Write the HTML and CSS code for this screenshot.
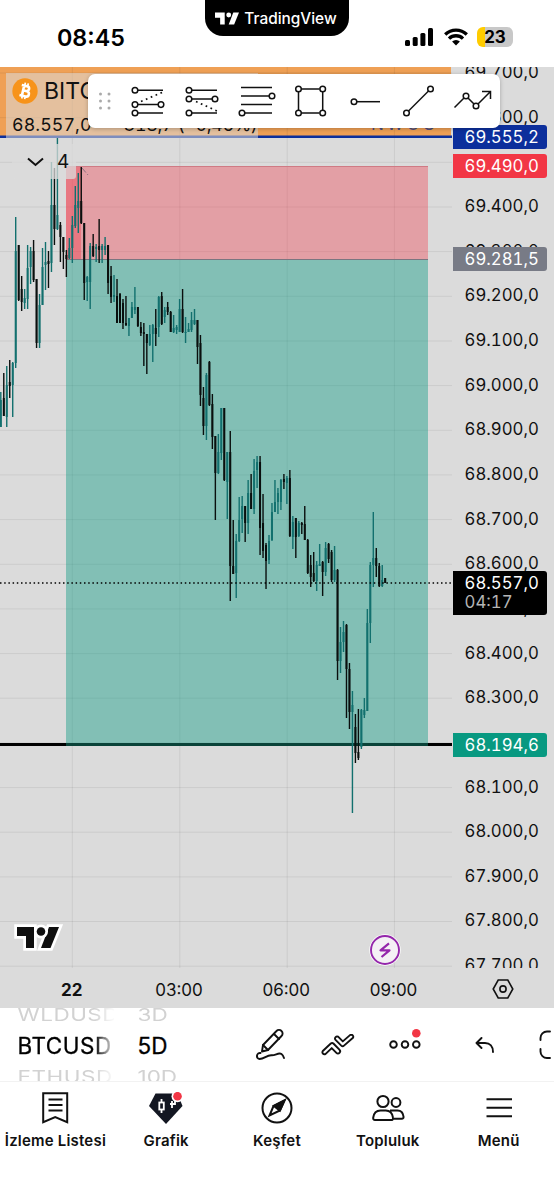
FILE: index.html
```html
<!DOCTYPE html>
<html lang="tr">
<head>
<meta charset="UTF-8">
<meta name="viewport" content="width=device-width, initial-scale=1.0">
<title>BTCUSD - TradingView</title>
<link rel="stylesheet" href="styles.css">
</head>
<body>
<div class="app">
    <header class="status-bar">
        <div class="clock">08:45</div>
        <div class="island">
            <svg width="24" height="13" viewBox="0 0 42 21" fill="#fff"><path d="M0 0h17v21H9V9H0z"/><circle cx="24" cy="4.5" r="4.3"/><path d="M32 0h10l-8.500 21H24z"/></svg>
            <span>TradingView</span>
        </div>
        <div class="status-icons">
            <svg width="29" height="18" viewBox="0 0 29 18"><rect x="0" y="12" width="5" height="6" rx="1.500"/><rect x="7.700" y="9" width="5" height="9" rx="1.500"/><rect x="15.400" y="5" width="5" height="13" rx="1.500"/><rect x="23" y="0" width="5" height="18" rx="1.500"/></svg>
            <svg width="24" height="18" viewBox="0 0 24 18"><g fill="none" stroke="#000" stroke-width="3.300"><path d="M1.200 6.500a15.500 15.500 0 0 1 21.600 0"/><path d="M5 10.600a10 10 0 0 1 14 0"/></g><path d="M12 17.500l-3.900-3.900a5.600 5.600 0 0 1 7.800 0z"/></svg>
            <div class="battery">23</div>
        </div>
    </header>

    <main class="chart">
        <div class="plot">
            <svg id="canvas" class="canvas" width="452" height="901" viewBox="0 67 452 901">
                <rect x="0" y="67" width="451" height="69" fill="#efa055"/>
                <text x="371" y="129.500" class="zone-text">NWOG</text>
                <g id="grid" stroke="#000" stroke-opacity=".07"></g>
                <rect x="66" y="166" width="362" height="93.500" fill="#f23645" fill-opacity=".36"/>
                <rect x="66" y="166" width="15" height="93.500" fill="#f23645" fill-opacity=".36"/>
                <rect x="66" y="259.500" width="362" height="485.500" fill="#089981" fill-opacity=".42"/>
                <path d="M66 166.500h362" stroke="#cf7a84"/>
                <path d="M66 259.500h362" stroke="#7a7680"/>
                <path d="M82 168l6 7" stroke="#8d7080" stroke-dasharray="6 2"/>
                <path d="M0 744.500h452" stroke="#000" stroke-width="3"/>
                <path d="M66 744.500h362" stroke="#0a4339" stroke-width="3"/>
                <path d="M0 136.800h452" stroke="#0c2f9c" stroke-width="2.400"/>
                <g id="candles"></g>
                <path d="M0 583h452" stroke="#000" stroke-width="1.500" stroke-dasharray="1.500 2.700"/>
            </svg>
            <div class="legend">
                <div class="symbol">
                    <svg width="26" height="26" viewBox="0 0 26 26"><circle cx="13" cy="13" r="12.700" fill="#f7931a"/><g transform="rotate(13 13 13)" fill="none" stroke="#fff"><path stroke-width="2.600" d="M8.500 7.800h5.500a2.400 2.400 0 0 1 0 5H11h3.800a2.700 2.700 0 0 1 0 5.400H8.500M11 7.800v10.400"/><path stroke-width="1.700" d="M11.500 4.800v3M14.500 4.800v3M11.500 18v3M14.500 18v3"/></g></svg>
                    <span>BITCOIN</span>
                </div>
                <div class="quote"><span>68.557,0</span><span class="change">−318,7 (−0,46%)</span></div>
            </div>
            <div class="indicator-count">
                <svg width="17" height="10" viewBox="0 0 17 10" fill="none" stroke="#111" stroke-width="2"><path d="M1 1.500l7.500 6.500L16 1.500"/></svg>
                <span>4</span>
            </div>
            <svg class="watermark" width="50" height="29" viewBox="-4 -4 50 29"><g fill="#0f0f0f" stroke="#fff" stroke-width="5.500" paint-order="stroke"><path d="M0 0h17v21H9V9H0z"/><path d="M32 0h10l-8.500 21H24z"/><circle cx="24" cy="4.500" r="4.300"/></g><path fill="#0f0f0f" d="M0 0h17v21H9V9H0z"/></svg>
            <svg class="event" width="32" height="32" viewBox="0 0 32 32"><circle cx="16" cy="16" r="15.700" fill="#fff"/><circle cx="16" cy="16" r="14" fill="#f4f0f5" stroke="#9426ab" stroke-width="1.900"/><path d="M20 9.300l-8.500 7h9L12.500 23" fill="none" stroke="#9426ab" stroke-width="2.200" stroke-linejoin="round"/></svg>
        </div>
        <div class="price-axis">
            <div class="prices">
                <span>69.700,0</span><span>69.600,0</span><span>69.500,0</span><span>69.400,0</span><span>69.300,0</span><span>69.200,0</span><span>69.100,0</span><span>69.000,0</span><span>68.900,0</span><span>68.800,0</span><span>68.700,0</span><span>68.600,0</span><span>68.500,0</span><span>68.400,0</span><span>68.300,0</span><span>68.200,0</span><span>68.100,0</span><span>68.000,0</span><span>67.900,0</span><span>67.800,0</span><span>67.700,0</span>
            </div>
            <div class="tag tag-blue">69.555,2</div>
            <div class="tag tag-red">69.490,0</div>
            <div class="tag tag-gray">69.281,5</div>
            <div class="tag tag-last">68.557,0<small>04:17</small></div>
            <div class="tag tag-green">68.194,6</div>
        </div>
        <div class="draw-tools">
            <svg class="grip" width="14" height="18" viewBox="0 0 14 18" fill="#aaa"><circle cx="2.500" cy="2" r="1.500"/><circle cx="11" cy="2" r="1.500"/><circle cx="2.500" cy="9" r="1.500"/><circle cx="11" cy="9" r="1.500"/><circle cx="2.500" cy="16" r="1.500"/><circle cx="11" cy="16" r="1.500"/></svg>
            <svg class="tool" viewBox="0 0 54 54"><path d="M17 16.300h25M17 30.600h20M17 39h25"/><path class="dots" d="M20 27.500L42 18"/><circle cx="14" cy="16.300" r="2.800"/><circle cx="14" cy="30.600" r="2.800"/><circle cx="40" cy="30.600" r="2.800"/><circle cx="14" cy="39" r="2.800"/></svg>
            <svg class="tool" viewBox="0 0 54 54"><path d="M17 16.300h25M17 25h20M17 39h25"/><path class="dots" d="M21 27.500L42 37"/><circle cx="14" cy="16.300" r="2.800"/><circle cx="14" cy="25" r="2.800"/><circle cx="40" cy="25" r="2.800"/><circle cx="14" cy="39" r="2.800"/></svg>
            <svg class="tool" viewBox="0 0 54 54"><path d="M12 13.400h31M12 22h28M12 30.600h31M16 39h27"/><circle cx="43" cy="22" r="2.800"/><circle cx="13" cy="39" r="2.800"/></svg>
            <svg class="tool" viewBox="0 0 54 54"><path d="M18.500 15h18M18.500 39h18M15.500 18v18M39.700 18v18"/><circle cx="15.500" cy="15" r="2.800"/><circle cx="39.700" cy="15" r="2.800"/><circle cx="15.500" cy="39" r="2.800"/><circle cx="39.700" cy="39" r="2.800"/></svg>
            <svg class="tool" viewBox="0 0 54 54"><path d="M20 27.700h23"/><circle cx="17" cy="27.700" r="2.800"/></svg>
            <svg class="tool" viewBox="0 0 54 54"><path d="M17.500 37l20-20"/><circle cx="15.500" cy="39" r="2.800"/><circle cx="39.500" cy="15" r="2.800"/></svg>
            <svg class="tool" viewBox="0 0 54 54"><path d="M9.500 33.500L19 24M23 24l6 6M33 30l12.500-12.500M37 17.500h8.500v7.500"/><circle cx="21" cy="22" r="2.800"/><circle cx="31" cy="32" r="2.800"/></svg>
        </div>
    </main>

    <div class="time-axis">
        <span class="day">22</span><span>03:00</span><span>06:00</span><span>09:00</span>
        <svg width="22" height="20" viewBox="0 0 22 20" fill="none" stroke="#111" stroke-width="1.600"><path d="M6.200 1h9.600l5 9-5 9H6.200l-5-9z"/><circle cx="11" cy="10" r="3.100"/></svg>
    </div>

    <div class="toolbar">
        <div class="wheel wheel-symbol"><span>WLDUSD</span><b>BTCUSD</b><span>ETHUSD</span></div>
        <div class="wheel wheel-interval"><span>3D</span><b>5D</b><span>10D</span></div>
        <div class="actions">
            <svg width="32" height="34" viewBox="0 0 32 34"><path d="M8 17L21.500 3a3.400 3.400 0 0 1 5 0 3.400 3.400 0 0 1 0 5L13 22l-6 1.500z"/><path d="M8 17l5 5M19 6l5 5"/><path d="M5.500 25A3 3 0 1 0 4.500 31c5 0 7-4 12-3.700 4 .3 7-3.300 10-1.300 1.500 1 2 2.500 2.500 4"/></svg>
            <svg width="34" height="22" viewBox="0 0 34 22"><path d="M1.800 17l8-7.500a2 2 0 0 1 2.600 0l6 6.200a2 2 0 0 1-3 3.200l-4.700-4.800-6.300 6a2.100 2.100 0 0 1-2.600-3.100z"/><path d="M14.300 5.600l6 6a2 2 0 0 0 2.700 0l9-7.800A2.100 2.100 0 0 0 29.300.900l-7.500 6.500-4.700-4.700a2.100 2.100 0 0 0-2.800 2.900z"/></svg>
            <svg class="more" width="32" height="26" viewBox="0 0 32 26"><circle cx="4.500" cy="15.500" r="3.300"/><circle cx="16" cy="15.500" r="3.300"/><circle cx="27.300" cy="15.500" r="3.300"/><circle class="dot" cx="27.300" cy="4.300" r="4.300"/></svg>
            <i class="divider"></i>
            <svg width="20" height="16" viewBox="0 0 20 16"><path d="M6.500 1L1.500 6l5 5M2 6h8c5 0 8 3.500 8 9"/></svg>
            <svg width="12" height="30" viewBox="0 0 12 30"><path d="M11 1.500H8A6.500 6.500 0 0 0 1.500 8v2M1.500 19v2.500A6.500 6.500 0 0 0 8 28h3"/></svg>
        </div>
    </div>

    <nav class="tabs">
        <a><svg width="32" height="32" viewBox="0 0 32 32"><path d="M4.200 1.200h24v29L16.200 25l-12 5.200zM9.500 7.500h14M9.500 13h14M9.500 18.500h14"/></svg>İzleme Listesi</a>
        <a><svg width="36" height="32" viewBox="0 0 36 32"><path d="M7.500 1.500h22L34.500 14 18 32 1 14z" fill="#131722" stroke="none"/><g stroke="#fff" stroke-width="1.800"><path d="M13.500 7v14"/><rect x="11.300" y="10.500" width="4.500" height="7" fill="#131722"/><path d="M24 9v7M22 12h5M27 8v5"/></g><circle class="dot" cx="29.500" cy="4.200" r="6" fill="#fff"/><circle class="dot" cx="29.500" cy="4.200" r="4.300"/></svg>Grafik</a>
        <a><svg width="32" height="32" viewBox="0 0 32 32"><circle cx="16" cy="16" r="14.500"/><path d="M23.500 8.500l-11 5.500-4 9.500 10.500-5z"/><path d="M23.500 8.500L12.800 14l6 4.700z" fill="#111"/></svg>Keşfet</a>
        <a><svg width="34" height="32" viewBox="0 0 34 32"><circle cx="12" cy="9.500" r="5.600"/><circle cx="25" cy="10.500" r="4.400"/><path d="M4 28h16c1.500 0 2.300-.7 2-2.300-.7-4.500-3.500-7.200-7.200-7.200H9.500c-3.700 0-6.700 2.700-7.300 7.200C2 27.300 2.700 28 4 28zM19 18.500h7.500c3 0 5.500 2 6 6 .200 1.500-.4 2.200-1.800 2.200H22"/></svg>Topluluk</a>
        <a><svg width="32" height="32" viewBox="0 0 32 32"><path d="M3.500 7.300h25.500M3.500 15.700h25.500M3.500 24.300h25.500"/></svg>Menü</a>
    </nav>
</div>
<script src="chart.js"></script>
</body>
</html>
```
FILE: styles.css
```css
* {
    box-sizing: border-box;
}

body {
    margin: 0;
    background: #fff;
    color: #111;
    font-family: Inter, "Liberation Sans", sans-serif;
}

.app {
    display: flex;
    flex-direction: column;
    width: 554px;
    height: 1200px;
    overflow: hidden;
}

/* status bar */
.status-bar {
    display: grid;
    grid-template-columns: 205px 144px 1fr;
    height: 67px;
    flex: none;
}

.clock {
    padding: 22px 0 0 57px;
    font-size: 23.3px;
    line-height: 31px;
    font-weight: 600;
    color: #000;
}

.island {
    display: flex;
    align-items: center;
    justify-content: center;
    gap: 5px;
    height: 36px;
    padding-right: 2px;
    border-radius: 0 0 18px 18px;
    background: #000;
    color: #fff;
    font-size: 15.4px;
    font-weight: 500;
}

.status-icons {
    display: flex;
    align-items: center;
    gap: 9.5px;
    height: 20px;
    margin: 27px 0 0 56px;
}

.battery {
    width: 36px;
    height: 20px;
    border-radius: 6px;
    background: linear-gradient(90deg, #ffcc00 8px, #c8c8c8 8px);
    color: #000;
    font-size: 17px;
    line-height: 20px;
    font-weight: 700;
    text-align: center;
}

/* chart */
.chart {
    position: relative;
    display: flex;
    height: 901px;
    flex: none;
    background: #dbdbdb;
}

.plot {
    position: relative;
    width: 452px;
}

.canvas {
    display: block;
}

.zone-text {
    font-size: 17px;
    letter-spacing: 3px;
    fill: #4a4c80;
}

.legend {
    position: absolute;
    left: 6px;
    top: 6px;
    width: 252px;
    height: 65px;
    padding: 5px 6px;
    background: rgba(219, 219, 219, .55);
    white-space: nowrap;
}

.symbol {
    display: flex;
    align-items: center;
    gap: 6px;
    height: 26px;
    font-size: 23px;
}

.quote {
    display: flex;
    gap: 21px;
    margin-top: 9.5px;
    font-size: 17.8px;
    line-height: 22px;
    letter-spacing: .1px;
    font-variant-numeric: tabular-nums;
}

.change {
    letter-spacing: -.3px;
}

.indicator-count {
    position: absolute;
    left: 12px;
    top: 77px;
    display: flex;
    align-items: center;
    gap: 13px;
    width: 64px;
    height: 35px;
    padding-left: 15px;
    border-radius: 3px;
    background: rgba(219, 219, 219, .75);
    font-size: 19px;
}

.watermark {
    position: absolute;
    left: 13px;
    top: 856px;
}

.event {
    position: absolute;
    left: 369px;
    top: 867px;
}

.price-axis {
    position: relative;
    width: 102px;
    overflow: hidden;
    font-size: 16.8px;
    font-variant-numeric: tabular-nums;
}

.prices {
    display: flex;
    flex-direction: column;
    margin-top: -17px;
    padding-left: 12.5px;
}

.prices span {
    flex: none;
    height: 44.66px;
    line-height: 44.66px;
}

.tag {
    position: absolute;
    left: 1px;
    width: 94px;
    height: 24px;
    padding-left: 11.5px;
    border-radius: 0 3px 3px 0;
    color: #fff;
    line-height: 24px;
}

.tag small {
    display: block;
    color: #b5b5b5;
    font-size: 16.8px;
    line-height: 15px;
}

.tag-blue {
    top: 58px;
    background: #0c2f9c;
}

.tag-red {
    top: 87px;
    background: #f23645;
}

.tag-gray {
    top: 180px;
    background: #787b86;
}

.tag-last {
    top: 504px;
    height: 44px;
    background: #000;
}

.tag-green {
    top: 666px;
    background: #089981;
}

.draw-tools {
    position: absolute;
    left: 88px;
    top: 7px;
    display: flex;
    width: 412px;
    height: 54px;
    padding-left: 10px;
    border-radius: 7px;
    background: #fff;
    box-shadow: 0 1px 4px rgba(0, 0, 0, .25);
}

.grip {
    width: 14px;
    margin: 18px 9px 0 0;
}

.tool {
    width: 54px;
    height: 54px;
    flex: none;
    fill: none;
    stroke: #111;
    stroke-width: 1.5;
}

.tool .dots {
    stroke-width: 1.7;
    stroke-dasharray: 1.7 3.6;
}

/* time axis */
.time-axis {
    display: grid;
    grid-template-columns: 18px repeat(4, 107.3px) 1fr;
    align-items: center;
    height: 40px;
    flex: none;
    padding-top: 3px;
    background: #dbdbdb;
    font-size: 17px;
    text-align: center;
}

.time-axis .day {
    grid-column: 2;
    font-weight: 700;
}

.time-axis svg {
    margin: -2px 0 0 45px;
}

/* bottom toolbar */
.toolbar {
    display: flex;
    height: 74px;
    flex: none;
    overflow: hidden;
    border-bottom: 1px solid #f2f2f2;
}

.wheel {
    display: flex;
    flex-direction: column;
    justify-content: center;
    flex: none;
    padding-top: 2px;
    font-size: 22.5px;
    line-height: 31px;
}

.wheel span {
    color: #d2d2d2;
    transform: scaleY(.75);
}

.wheel b {
    font-weight: 400;
    color: #000;
    -webkit-text-stroke: .3px #000;
}

.wheel-symbol {
    width: 96px;
    margin-left: 17.5px;
    overflow: hidden;
    letter-spacing: .5px;
    -webkit-mask-image: linear-gradient(90deg, #000 76px, transparent 98px);
    mask-image: linear-gradient(90deg, #000 76px, transparent 98px);
}

.wheel-interval {
    width: 118px;
    padding-left: 24px;
}

.actions {
    display: flex;
    align-items: center;
    flex: none;
    width: 300px;
    margin-left: 23.5px;
}

.actions svg {
    flex: none;
    margin-right: 34px;
    fill: none;
    stroke: #111;
    stroke-width: 1.9;
    stroke-linejoin: round;
    stroke-linecap: round;
}

.actions .more {
    margin: -5px 25px 0 0;
}

.divider {
    width: 1px;
    height: 26px;
    margin-right: 29px;
    background: #f0f0f0;
}

.actions .divider + svg {
    margin-right: 44px;
}

.dot {
    fill: #f23645;
    stroke: none;
}

.dot[fill] {
    fill: #fff;
}

/* tabs */
.tabs {
    display: grid;
    grid-template-columns: repeat(5, 1fr);
    padding-top: 10px;
}

.tabs a {
    display: flex;
    flex-direction: column;
    align-items: center;
    font-size: 15px;
    line-height: 33px;
    letter-spacing: .2px;
    font-weight: 600;
    white-space: nowrap;
}

.tabs svg {
    fill: none;
    stroke: #111;
    stroke-width: 2;
}
```
FILE: chart.js
```javascript
// [high, low, body top, body bottom, up]
var candles = [
    [392,427,400,427,1],[373,416,398,416,0],[366,427,385,417,1],[360,398,382,386,0],[362,417,363,385,1],
    [217,368,251,363,1],[245,301,245,300,0],[276,311,289,302,0],[289,309,298,303,1],[245,309,268,299,1],
    [247,284,251,267,1],[240,282,251,280,0],[279,348,279,343,0],[294,348,305,343,1],[248,305,267,305,1],
    [242,290,262,265,1],[251,288,261,264,0],[162,272,205,263,1],[168,245,205,229,0],[138,230,215,229,1],
    [222,262,225,237,0],[237,269,237,252,0],[250,277,255,259,0],[238,259,248,258,1],[216,263,225,248,1],
    [186,228,205,226,1],[173,233,201,208,1],[167,224,201,223,0],[223,300,223,283,0],[276,301,277,282,1],
    [243,309,246,282,1],[234,257,246,256,0],[244,262,247,249,1],[219,263,246,250,0],[244,263,246,250,1],
    [237,255,246,250,1],[245,294,245,283,0],[266,303,276,297,0],[275,302,295,297,1],[279,323,296,323,0],
    [293,323,294,323,0],[299,329,303,323,0],[296,326,323,325,0],[318,336,318,326,1],[302,318,307,318,1],
    [287,314,307,310,1],[307,327,307,326,0],[322,336,327,333,0],[323,366,332,334,0],[334,374,334,343,0],
    [325,346,334,345,1],[324,362,325,334,1],[309,346,328,334,0],[296,337,297,327,1],[292,325,296,324,0],
    [307,323,310,317,1],[302,315,307,312,0],[311,332,312,332,0],[315,333,328,332,1],[325,334,327,330,1],
    [299,332,309,332,1],[289,333,309,332,0],[317,343,332,333,1],[323,332,329,332,1],[312,332,320,330,1],
    [309,325,320,324,1],[320,364,320,347,0],[335,406,343,395,0],[387,435,398,426,0],[373,440,375,426,1],
    [361,406,362,405,0],[394,449,404,437,0],[436,520,436,473,0],[434,474,452,473,1],[408,460,408,453,1],
    [408,481,408,480,0],[452,519,452,482,1],[431,601,452,566,0],[520,574,566,574,0],[534,598,541,573,1],
    [497,542,520,541,1],[496,533,506,519,1],[506,542,506,523,0],[480,534,493,523,1],[474,509,493,509,0],
    [459,514,471,509,1],[456,488,462,470,1],[456,555,462,528,0],[494,558,523,551,0],[543,589,545,561,0],
    [535,564,541,560,1],[503,541,512,540,1],[480,512,502,512,1],[488,514,493,502,1],[479,510,480,502,1],
    [474,489,479,482,0],[476,504,478,483,1],[470,537,478,536,0],[516,549,522,537,1],[518,558,518,537,0],
    [521,537,523,536,1],[522,534,523,525,0],[506,540,524,540,0],[539,574,540,573,0],[555,587,565,577,0],
    [552,582,573,581,0],[561,591,565,581,1],[544,566,564,566,1],[561,596,562,572,0],[542,576,548,572,1],
    [543,563,544,559,0],[550,582,552,580,0],[546,582,570,580,1],[569,680,570,661,0],[627,673,642,661,1],
    [621,652,632,642,1],[624,718,625,669,0],[663,729,669,712,0],[691,813,705,712,1],[714,763,727,753,0],
    [709,760,752,758,0],[709,749,710,747,1],[698,718,710,715,1],[609,711,623,711,1],[562,643,565,623,1],
    [512,587,558,565,1],[548,577,558,566,0],[563,587,566,586,0],[565,587,580,586,1],[578,583,578,583,0]
];

function rect(x, y, w, h, color) {
    return '<rect x="' + x.toFixed(2) + '" y="' + y + '" width="' + w + '" height="' + h + '" fill="' + color + '"/>';
}

var html = '';
candles.forEach(function (c, i) {
    var x = 0.8 + i * 2.98;
    var color = c[4] ? '#12706e' : '#0a0f0e';
    html += rect(x - 0.7, c[0], 1.4, c[1] - c[0], color);
    html += rect(x - 1, c[2], 2, c[3] - c[2], color);
});
document.getElementById('candles').innerHTML = html;

var lines = '';
for (var k = 0; k < 21; k++) {
    lines += 'M0 ' + (966.2 - k * 44.66).toFixed(1) + 'H452';
}
[72.3, 179.8, 287.2, 394.4].forEach(function (x) {
    lines += 'M' + x + ' 67V968';
});
document.getElementById('grid').innerHTML = '<path d="' + lines + '"/>';
```
